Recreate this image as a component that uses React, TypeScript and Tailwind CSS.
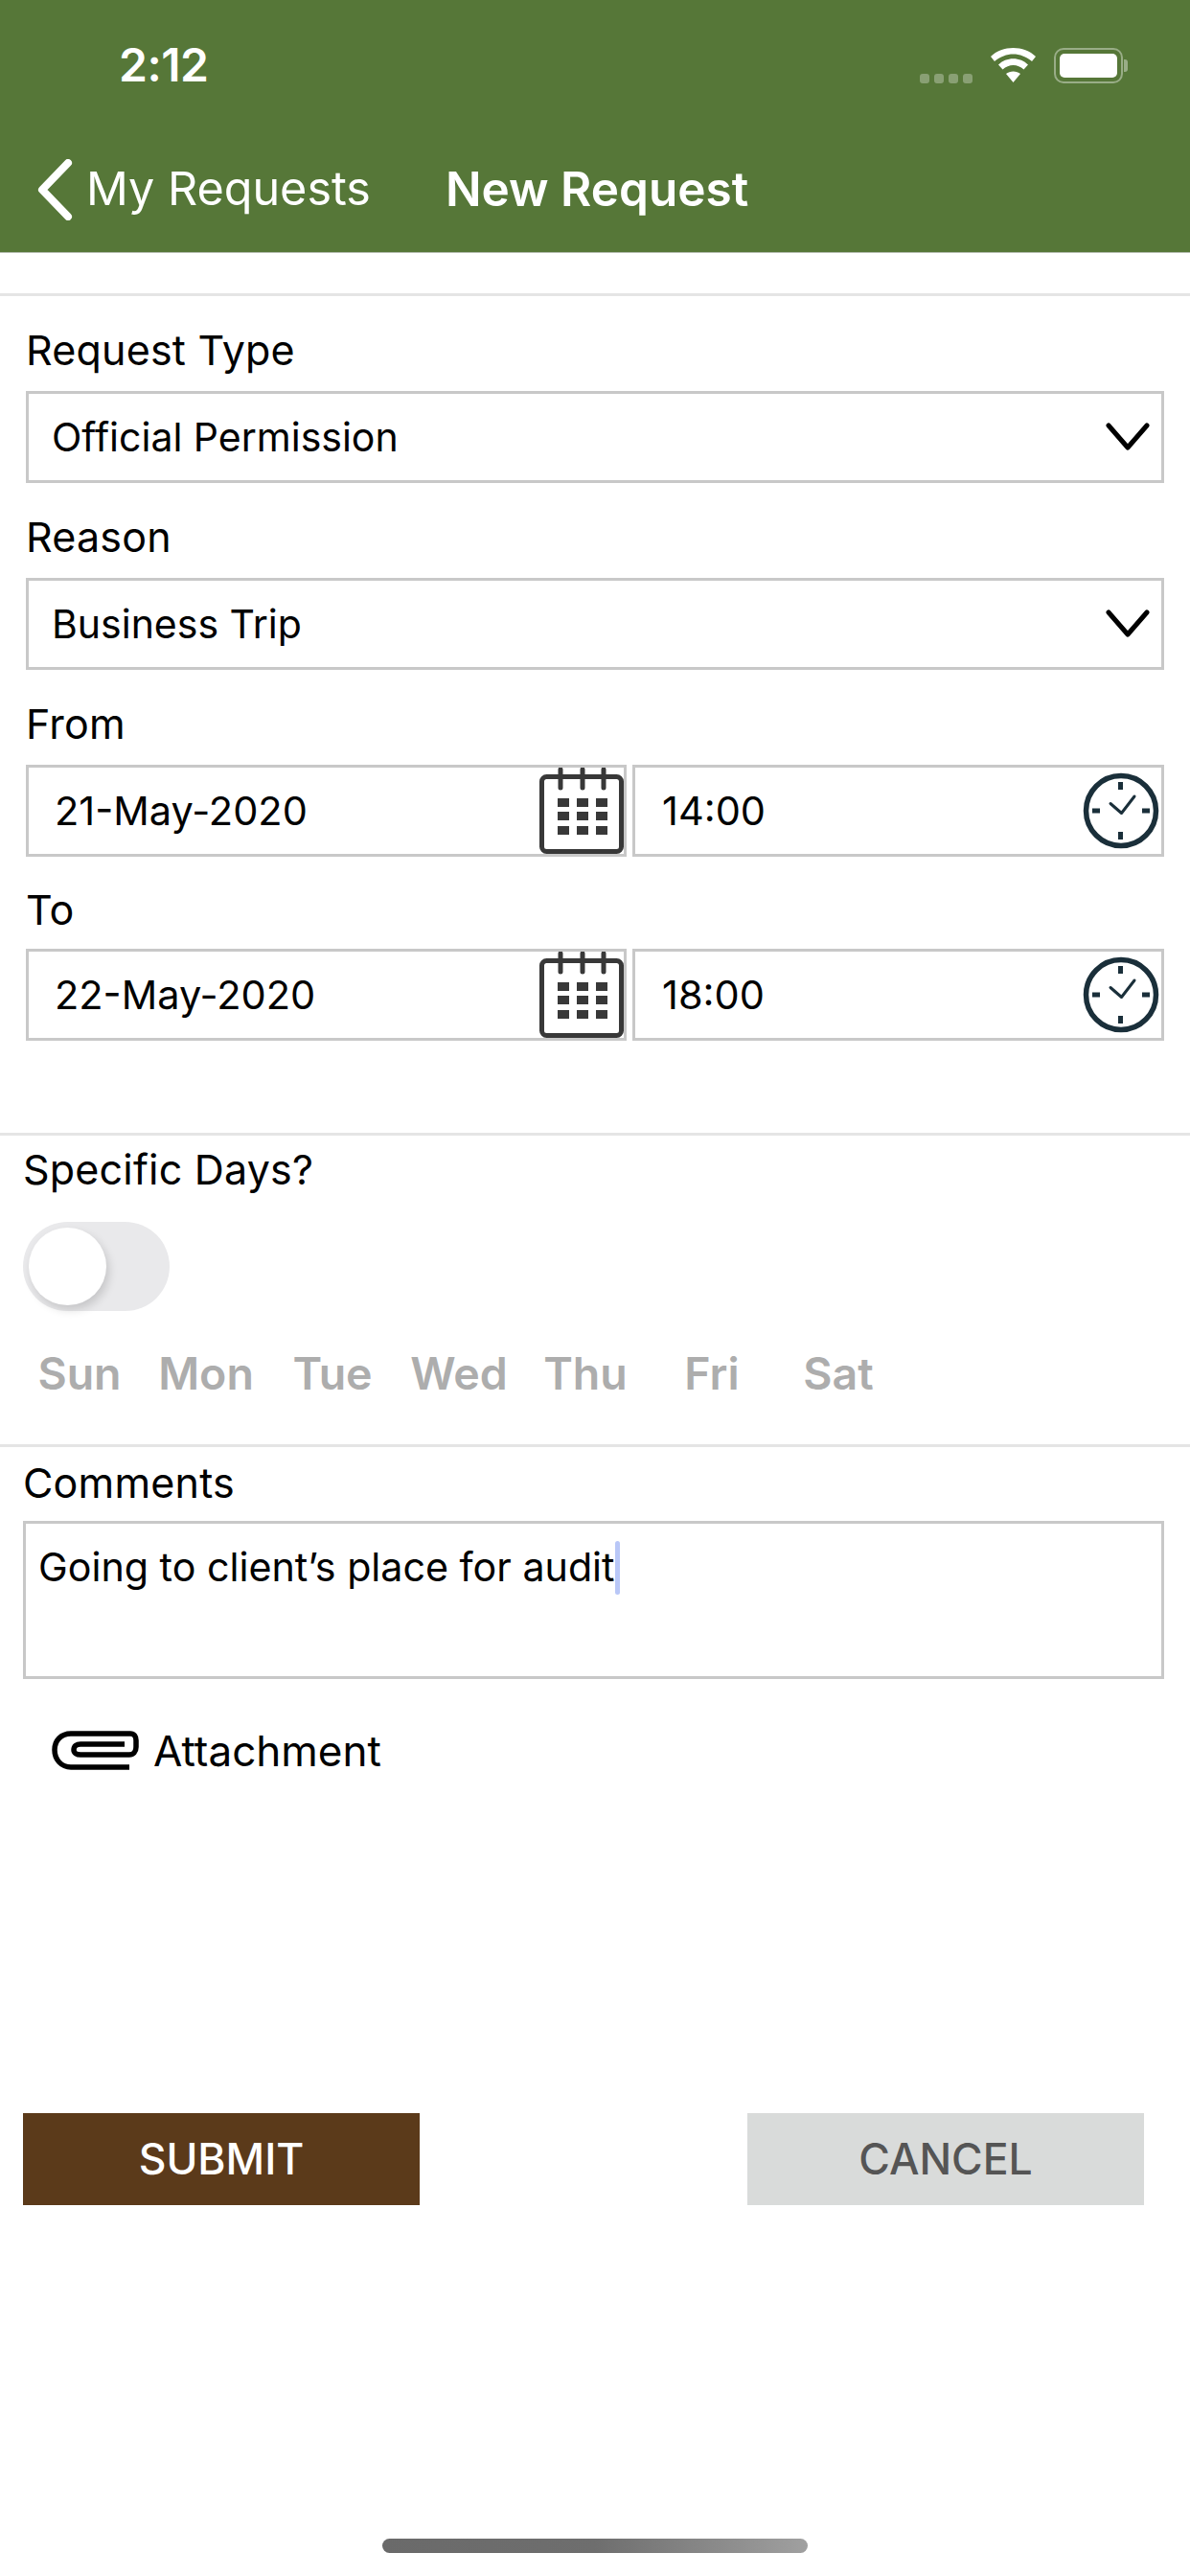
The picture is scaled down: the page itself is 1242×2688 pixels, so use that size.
import React from "react";

const font = "font-['Inter','Liberation_Sans',sans-serif]";

function Label({ children, className = "" }: { children: React.ReactNode; className?: string }) {
  return <div className={`h-[60px] flex items-center text-[43px] tracking-[0.2px] text-black ${className}`}>{children}</div>;
}

function Chevron() {
  return (
    <svg width="46" height="30" viewBox="0 0 46 30" fill="none" className="shrink-0">
      <path d="M3 3 L23 26 L43 3" stroke="#000" strokeWidth="5" strokeLinecap="round" strokeLinejoin="round" />
    </svg>
  );
}

function Select({ value }: { value: string }) {
  return (
    <div className="h-[96px] border-[3px] border-[#c8c8c8] flex items-center justify-between pl-[24px] pr-[12px] text-[41px] text-black">
      <span className="mt-[2px]">{value}</span>
      <Chevron />
    </div>
  );
}

function CalendarIcon() {
  return (
    <svg width="88" height="90" viewBox="0 0 88 90" fill="none" className="shrink-0">
      <rect x="2.5" y="9.5" width="83" height="78" rx="5" stroke="#383838" strokeWidth="5" fill="#fff" />
      <path d="M22 2V21M45 2V21M67 2V21" stroke="#383838" strokeWidth="5" strokeLinecap="round" />
      <g fill="#383838">
        <rect x="19" y="32" width="12" height="9" /><rect x="39" y="32" width="12" height="9" /><rect x="59" y="32" width="12" height="9" />
        <rect x="19" y="46" width="12" height="9" /><rect x="39" y="46" width="12" height="9" /><rect x="59" y="46" width="12" height="9" />
        <rect x="19" y="61" width="12" height="9" /><rect x="39" y="61" width="12" height="9" /><rect x="59" y="61" width="12" height="9" />
      </g>
    </svg>
  );
}

function ClockIcon() {
  return (
    <svg width="80" height="80" viewBox="0 0 80 80" fill="none" className="shrink-0">
      <circle cx="40" cy="40" r="36.5" stroke="#1a2f3a" strokeWidth="5.5" />
      <path d="M39.5 10V18M39.5 62V70M10 40H18M62 40H70" stroke="#1a2f3a" strokeWidth="5" />
      <path d="M29 32.5L40.5 42.5L54 25" stroke="#1a2f3a" strokeWidth="3" strokeLinecap="round" strokeLinejoin="round" />
    </svg>
  );
}

function DateTimeRow({ date, time }: { date: string; time: string }) {
  return (
    <div className="flex gap-[6px] h-[96px]">
      <div className="w-[627px] border-[3px] border-[#c8c8c8] flex items-center justify-between pl-[27px] pr-0 text-[41.5px] text-black">
        <span>{date}</span>
        <CalendarIcon />
      </div>
      <div className="flex-1 border-[3px] border-[#c8c8c8] flex items-center justify-between pl-[28px] pr-[2px] text-[41.5px] text-black">
        <span>{time}</span>
        <ClockIcon />
      </div>
    </div>
  );
}

const days = ["Sun", "Mon", "Tue", "Wed", "Thu", "Fri", "Sat"];

export default function App() {
  return (
    <div className={`w-[1242px] h-[2688px] bg-white flex flex-col overflow-hidden ${font}`}>
      <header className="h-[264px] bg-[#567738] border-b border-[#b5bdb0] text-white">
        <div className="h-[136px] flex items-center pl-[124px] pr-[65px] justify-between">
          <span className="text-[48px] font-semibold mt-[-1px] tracking-[-0.5px]">2:12</span>
          <div className="flex items-center">
            <div className="flex gap-[5px] self-end mr-[19px]">
              <span className="w-[10px] h-[10px] rounded-[3px] bg-white/30" />
              <span className="w-[10px] h-[10px] rounded-[3px] bg-white/30" />
              <span className="w-[10px] h-[10px] rounded-[3px] bg-white/30" />
              <span className="w-[10px] h-[10px] rounded-[3px] bg-white/30" />
            </div>
            <svg width="47" height="36" viewBox="0 0 47 36" className="mr-[19px]" fill="#fff">
              <path d="M0 9C12 -3 35 -3 47 9L43 14C31 4 16 4 4 14Z" />
              <path d="M8 17.5C16 9 31 9 39 17.5L34.5 22.5C28 16.5 19 16.5 12.5 22.5Z" />
              <path d="M16 27C20 23.5 27 23.5 31 27L23.5 36Z" />
            </svg>
            <div className="w-[72px] h-[37px] rounded-[10px] border-[2px] border-white/40 p-[4px]">
              <div className="w-full h-full rounded-[5px] bg-white" />
            </div>
            <div className="w-[4px] h-[13px] ml-[1px] rounded-r-[3px] bg-white/40" />
          </div>
        </div>
        <div className="h-[128px] flex items-center pl-[38px] pb-[5px]">
          <svg width="38" height="64" viewBox="0 0 38 64" fill="none" className="shrink-0">
            <path d="M33 4L6 32L33 60" stroke="#fff" strokeWidth="8" strokeLinecap="round" strokeLinejoin="round" />
          </svg>
          <span className="ml-[14px] text-[48.5px]">My Requests</span>
          <span className="ml-[78px] text-[49.5px] font-semibold">New Request</span>
        </div>
      </header>

      <div className="mt-[42px] h-[3px] bg-[#e5e5e5]" />

      <div className="px-[27px]">
        <Label className="mt-[26px] mb-[13px]">Request Type</Label>
        <Select value="Official Permission" />
        <Label className="mt-[26px] mb-[13px]">Reason</Label>
        <Select value="Business Trip" />
        <Label className="mt-[26px] mb-[13px]">From</Label>
        <DateTimeRow date="21-May-2020" time="14:00" />
        <Label className="mt-[25px] mb-[11px]">To</Label>
        <DateTimeRow date="22-May-2020" time="18:00" />
      </div>

      <div className="mt-[96px] h-[3px] bg-[#e5e5e5]" />

      <Label className="mt-[5px] ml-[24px]">Specific Days?</Label>
      <div className="mt-[25px] ml-[24px] w-[153px] h-[93px] rounded-full bg-[#e9e9eb] p-[6px]">
        <div className="w-[81px] h-[81px] rounded-full bg-white shadow-[3px_5px_10px_rgba(0,0,0,0.15)]" />
      </div>

      <div className="mt-[31px] mb-[48px] ml-[17px] grid grid-cols-[repeat(7,132px)] h-[60px] items-center text-center text-[46.5px] font-semibold text-[#adadad]">
        {days.map((d) => (
          <span key={d}>{d}</span>
        ))}
      </div>

      <div className="h-[3px] bg-[#e5e5e5]" />

      <Label className="mt-[7px] ml-[24px]">Comments</Label>
      <div className="mt-[10px] ml-[24px] w-[1191px] h-[165px] border-[3px] border-[#c8c8c8] pl-[13px] pt-[18px] text-[41.2px] text-black">
        <div className="flex items-center h-[56px]">
          <span>Going to client’s place for audit</span>
          <span className="w-[5px] h-[56px] rounded-full bg-[#b9c7f7]" />
        </div>
      </div>

      <div className="mt-[45px] ml-[54px] h-[60px] flex items-center">
        <svg width="91" height="42" viewBox="0 0 91 42" fill="none" className="shrink-0">
          <path d="M81 38H20C10 38 3 30 3 20C3 10 10 3 20 3H82C86 3 88 6 88 10V17C88 22 85 25 81 25H30C26 25 23 23 23 20C23 16 26 14 30 14H76" stroke="#000" strokeWidth="5.5" />
        </svg>
        <span className="ml-[15px] text-[44px] text-black">Attachment</span>
      </div>

      <div className="mt-[348px] ml-[24px] w-[1170px] flex justify-between">
        <button className="w-[414px] h-[96px] bg-[#5b3a1a] text-white text-[44.5px] font-medium">SUBMIT</button>
        <button className="w-[414px] h-[96px] bg-[#d9dbda] text-[#555555] text-[44.5px] font-medium">CANCEL</button>
      </div>

      <div className="mt-[348px] mx-auto w-[444px] h-[15px] rounded-full bg-gradient-to-r from-[#6a6a6a] via-[#6e6e6e] to-[#a0a0a0]" />
    </div>
  );
}
